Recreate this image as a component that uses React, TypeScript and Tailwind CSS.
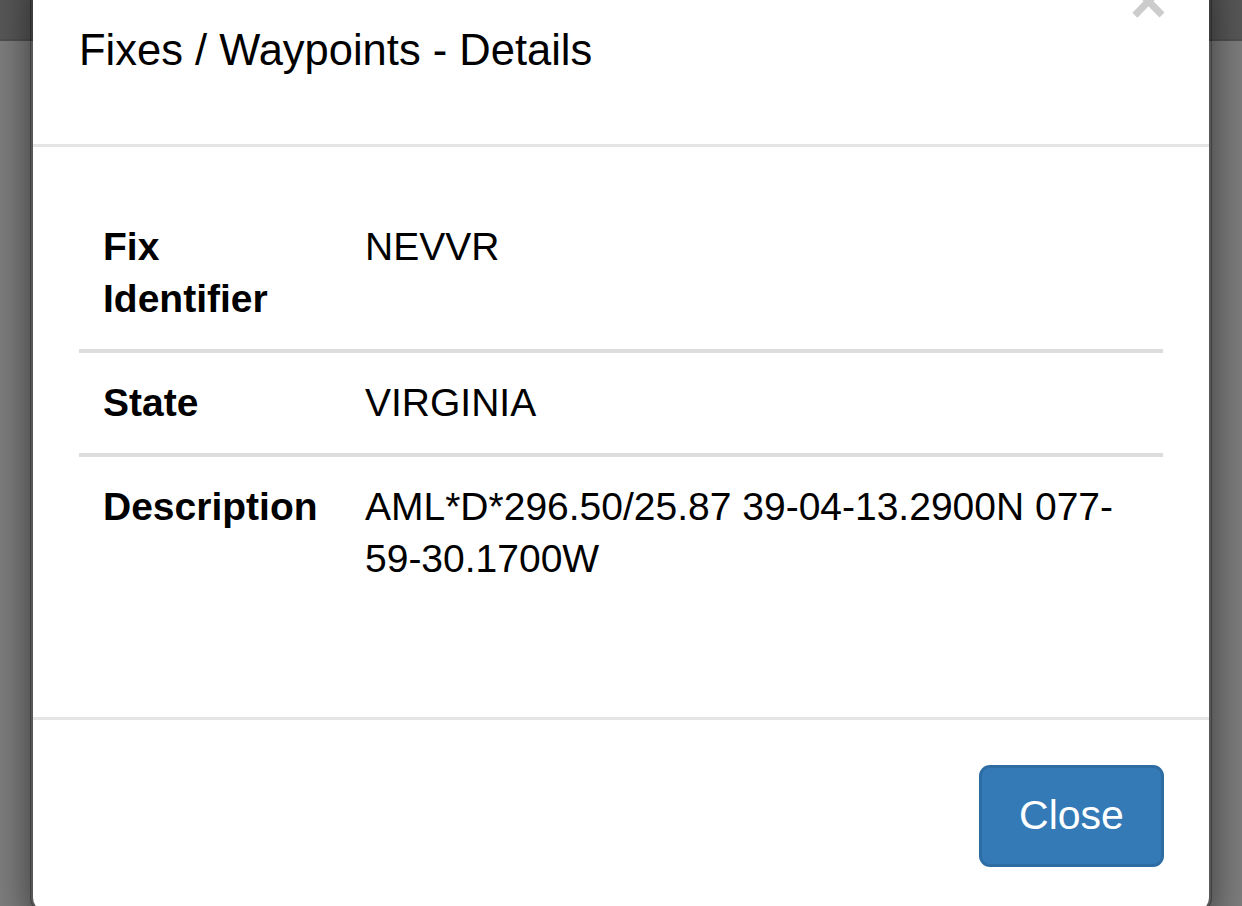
export default function App() {
  const rows = [
    { label: 'Fix Identifier', value: 'NEVVR' },
    { label: 'State', value: 'VIRGINIA' },
    { label: 'Description', value: 'AML*D*296.50/25.87 39-04-13.2900N 077-59-30.1700W' },
  ];

  return (
    <div className="relative h-[906px] w-[1242px] overflow-hidden bg-[#7e7e7e] font-['Liberation_Sans',Arial,sans-serif] text-black">
      {/* page behind the backdrop */}
      <div className="h-[41px] border-b-[2px] border-[#505050] bg-[#585858]" />

      {/* modal */}
      <div className="absolute left-[30px] top-[-40px] w-[1182px] rounded-[16px] border-[3px] border-black/30 bg-white bg-clip-padding shadow-[0_14px_40px_rgba(0,0,0,0.55)]">
        {/* header */}
        <div className="relative border-b-[3px] border-[#e5e5e5] px-[46px] pb-[70px] pt-[63px]">
          <span className="absolute right-[42px] top-[6px] text-[64px] font-bold leading-none text-[#cccccc]">
            ×
          </span>
          <h4 className="text-[43.5px] leading-[48px]">Fixes / Waypoints - Details</h4>
        </div>

        {/* body */}
        <div className="px-[46px] pb-[108px] pt-[50px]">
          {rows.map((row, i) => (
            <div
              key={row.label}
              className={
                i < rows.length - 1
                  ? 'flex border-b-[4px] border-[#dddddd] text-[39px] leading-[52px]'
                  : 'flex text-[39px] leading-[52px]'
              }
            >
              <div className="w-[262px] shrink-0 px-[24px] py-[24px] font-bold">{row.label}</div>
              <div className="min-w-0 flex-1 px-[24px] py-[24px]">{row.value}</div>
            </div>
          ))}
        </div>

        {/* footer */}
        <div className="flex justify-end border-t-[3px] border-[#e5e5e5] px-[45px] pb-[44px] pt-[45px]">
          <button className="flex h-[102px] w-[185px] items-center justify-center rounded-[11px] border-[3px] border-[#2e6da4] bg-[#337ab7] text-[41px] text-white">
            Close
          </button>
        </div>
      </div>
    </div>
  );
}
